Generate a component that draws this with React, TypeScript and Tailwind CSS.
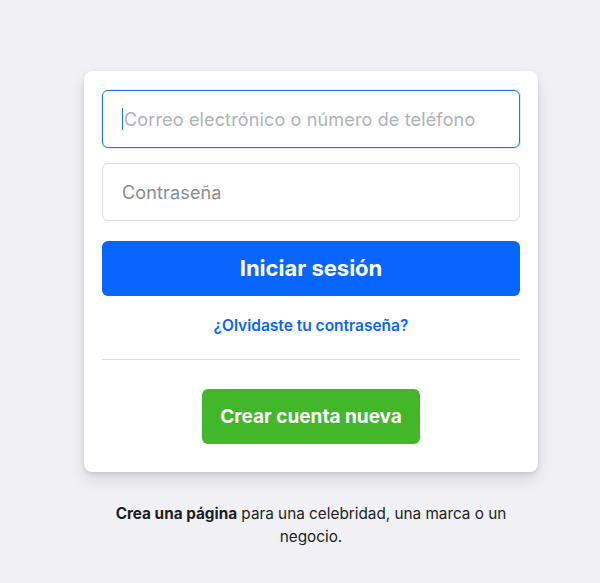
import React from "react";

export default function App() {
  return (
    <div
      className="min-h-[583px] w-[600px] bg-[#f0f0f5] pt-[71px] pl-[84px]"
      style={{ fontFamily: "Inter, 'Liberation Sans', sans-serif" }}
    >
      <div className="w-[454px]">
        <div className="rounded-[8px] bg-white px-[18px] pt-[19px] pb-[28px] shadow-[0_2px_4px_rgba(0,0,0,0.1),0_8px_16px_rgba(0,0,0,0.1)]">
          <div className="flex h-[58px] items-center rounded-[6px] border border-[#1877f2] px-[19px] shadow-[0_0_0_1px_rgba(24,119,242,0.15)]">
            <span className="mr-[1px] h-[22px] w-[1px] bg-[#1877f2]" />
            <span className="text-[18px] tracking-[0.15px] text-[#b0b3b8]">Correo electrónico o número de teléfono</span>
          </div>
          <div className="mt-[15px] flex h-[58px] items-center rounded-[6px] border border-[#dddfe2] px-[19px]">
            <span className="text-[18px] tracking-[0.15px] text-[#8a8d91]">Contraseña</span>
          </div>
          <button className="mt-[20px] flex h-[55px] w-full items-center justify-center rounded-[6px] bg-[#0866ff] text-[22px] font-bold text-white">
            Iniciar sesión
          </button>
          <div className="mt-[18px] text-center text-[15.5px] font-semibold text-[#0866ff]">
            ¿Olvidaste tu contraseña?
          </div>
          <div className="mt-[22px] h-[1px] bg-[#dadde1]" />
          <div className="mt-[29px] flex justify-center">
            <button className="flex h-[55px] w-[218px] items-center justify-center rounded-[6px] bg-[#42b72a] text-[19px] font-bold text-white">
              Crear cuenta nueva
            </button>
          </div>
        </div>
        <p className="mx-auto mt-[30px] w-[420px] text-center text-[15.3px] leading-[23px] text-[#1c1e21]">
          <span className="font-bold">Crea una página</span> para una celebridad, una marca o un negocio.
        </p>
      </div>
    </div>
  );
}
